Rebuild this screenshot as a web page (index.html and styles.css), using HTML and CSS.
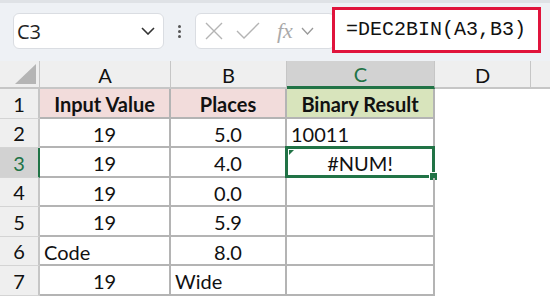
FILE: index.html
```html
<!DOCTYPE html>
<html lang="en">
<head>
    <meta charset="UTF-8">
    <title>DEC2BIN</title>
    <link rel="stylesheet" href="styles.css">
</head>
<body>
    <div class="toolbar">
        <div class="namebox">
            <span>C3</span>
            <svg width="14" height="8" viewBox="0 0 14 8"><path d="M1 1 L7 7 L13 1" fill="none" stroke="#333" stroke-width="1.6"/></svg>
        </div>
        <div class="dots"><i></i><i></i><i></i></div>
        <div class="fxbox">
            <svg class="ico" width="18" height="18" viewBox="0 0 18 18"><path d="M1 1 L17 17 M17 1 L1 17" stroke="#b4b4b4" stroke-width="1.4"/></svg>
            <svg class="ico" width="24" height="18" viewBox="0 0 24 18"><path d="M1 9 L8 16 L23 1" fill="none" stroke="#b4b4b4" stroke-width="1.4"/></svg>
            <span class="fx">fx</span>
            <svg width="13" height="8" viewBox="0 0 13 8"><path d="M1 1 L6.5 7 L12 1" fill="none" stroke="#999" stroke-width="1.3"/></svg>
        </div>
        <div class="formula">=DEC2BIN(A3,B3)</div>
    </div>

    <div class="sheet">
        <div class="corner"><svg width="21" height="20" viewBox="0 0 21 20"><path d="M21 0 L21 20 L0 20 Z" fill="#b5b5b5"/></svg></div>
        <div class="colhead">A</div>
        <div class="colhead">B</div>
        <div class="colhead on">C</div>
        <div class="colhead">D</div>
        <div class="colhead last"></div>

        <div class="rowhead">1</div>
        <div class="cell pink bold">Input Value</div>
        <div class="cell pink bold">Places</div>
        <div class="cell green bold">Binary Result</div>
        <div class="blank"></div><div class="blank"></div>

        <div class="rowhead">2</div>
        <div class="cell">19</div>
        <div class="cell">5.0</div>
        <div class="cell left">10011</div>
        <div class="blank"></div><div class="blank"></div>

        <div class="rowhead on">3</div>
        <div class="cell">19</div>
        <div class="cell">4.0</div>
        <div class="cell sel">#NUM!</div>
        <div class="blank"></div><div class="blank"></div>

        <div class="rowhead">4</div>
        <div class="cell">19</div>
        <div class="cell">0.0</div>
        <div class="cell"></div>
        <div class="blank"></div><div class="blank"></div>

        <div class="rowhead">5</div>
        <div class="cell">19</div>
        <div class="cell">5.9</div>
        <div class="cell"></div>
        <div class="blank"></div><div class="blank"></div>

        <div class="rowhead">6</div>
        <div class="cell left">Code</div>
        <div class="cell">8.0</div>
        <div class="cell"></div>
        <div class="blank"></div><div class="blank"></div>

        <div class="rowhead">7</div>
        <div class="cell">19</div>
        <div class="cell left">Wide</div>
        <div class="cell"></div>
        <div class="blank"></div><div class="blank"></div>
    </div>
</body>
</html>
```

FILE: styles.css
```css
body {
    margin: 0;
    background-color: #fff;
    font-family: 'Lato', 'Liberation Sans', sans-serif;
    overflow: hidden;
}

/* Formula bar */
.toolbar {
    height: 61px;
    box-sizing: border-box;
    background-color: #eef1f5;
    border-top: 3px solid #dfe2e6;
    display: flex;
    align-items: center;
    padding-left: 13px;
}

.namebox {
    width: 151px;
    height: 36px;
    box-sizing: border-box;
    margin-top: -2px;
    background-color: #fff;
    border: 1px solid #dadde2;
    border-radius: 6px;
    display: flex;
    align-items: center;
    justify-content: space-between;
    padding: 0 8px 0 3px;
    font-family: 'Open Sans', sans-serif;
    font-size: 20px;
    color: #222;
}

.dots {
    width: 31px;
    display: flex;
    flex-direction: column;
    align-items: center;
    gap: 2px;
    margin-top: -2px;
}

.dots i {
    width: 3px;
    height: 3px;
    border-radius: 50%;
    background-color: #555;
}

.fxbox {
    width: 140px;
    height: 36px;
    box-sizing: border-box;
    margin-top: -2px;
    background-color: #fff;
    border: 1px solid #dadde2;
    border-radius: 6px;
    display: flex;
    align-items: center;
    padding-left: 9px;
    gap: 13px;
}

.fx {
    font-family: 'Liberation Serif', serif;
    font-style: italic;
    font-size: 22px;
    color: #aaa;
    margin-left: 4px;
    margin-right: -5px;
}

.formula {
    margin-left: -3px;
    width: 209px;
    height: 46px;
    box-sizing: border-box;
    margin-top: -5px;
    background-color: #fff;
    border: 3px solid #e0143c;
    display: flex;
    align-items: center;
    padding-left: 11px;
    font-family: 'Liberation Mono', monospace;
    font-size: 20px;
    color: #111;
    position: relative;
}

/* Sheet grid */
.sheet {
    display: grid;
    grid-template-columns: 40px 131px 116px 148px 96px 1fr;
    grid-template-rows: 28px 30px 29px 30px 29px 30px 29px 30px;
    font-size: 20px;
    color: #111;
}

.corner,
.colhead,
.rowhead {
    background-color: #efefef;
    box-sizing: border-box;
    display: flex;
    align-items: center;
    justify-content: center;
}

.corner {
    border-right: 1px solid #c6c6c6;
    border-bottom: 2px solid #c6c6c6;
    justify-content: flex-end;
    padding-right: 3px;
}

.colhead {
    border-right: 1px solid #c6c6c6;
    border-bottom: 2px solid #c6c6c6;
    padding-top: 1px;
}

.colhead.last {
    border-right: none;
}

.colhead.on {
    background-color: #d2d2d2;
    color: #217346;
    border-bottom: 3px solid #217346;
}

.rowhead {
    border-right: 2px solid #c6c6c6;
    border-bottom: 1px solid #d4d4d4;
}

.rowhead.on {
    background-color: #d2d2d2;
    color: #217346;
    border-right: 2px solid #217346;
}

.cell {
    box-sizing: border-box;
    border-right: 2px solid #b4b4b4;
    border-bottom: 2px solid #b4b4b4;
    display: flex;
    align-items: center;
    justify-content: center;
    padding-top: 2px;
    position: relative;
}

.cell.left {
    justify-content: flex-start;
    padding-left: 4px;
}

.cell.bold {
    font-weight: bold;
}

.cell.pink {
    background-color: #f2dcdb;
}

.cell.green {
    background-color: #d8e4bc;
}

.cell.sel {
    border: 3px solid #217346;
    margin: -2px 0 0 -2px;
}

.cell.sel::before {
    content: "";
    position: absolute;
    left: 1px;
    top: 1px;
    border-top: 5px solid #217346;
    border-right: 5px solid transparent;
}

.cell.sel::after {
    content: "";
    position: absolute;
    right: -6px;
    bottom: -6px;
    width: 7px;
    height: 7px;
    background-color: #217346;
    border: 1px solid #fff;
}

.blank {
    background-color: #fff;
}
```
